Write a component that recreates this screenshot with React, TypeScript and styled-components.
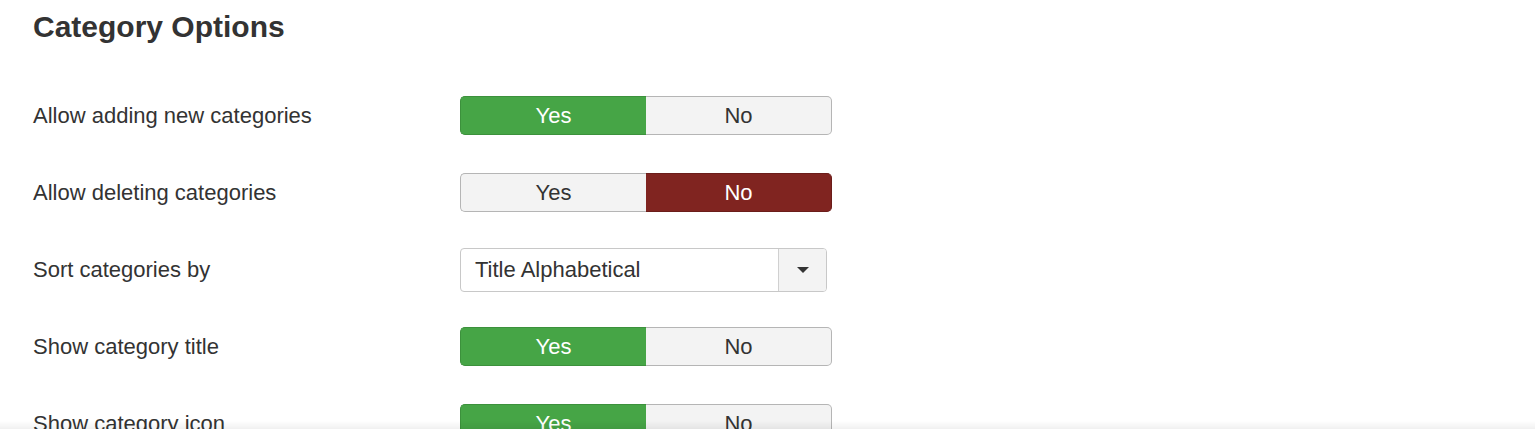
import React from "react";
import styled, { createGlobalStyle } from "styled-components";

const Global = createGlobalStyle`
  html, body { margin: 0; padding: 0; background: #fff; }
  body { font-family: "Liberation Sans", Arial, Helvetica, sans-serif; color: #333; }
`;

const Page = styled.div`
  padding: 0 0 0 33px;
`;

const Heading = styled.h2`
  margin: 0;
  height: 77px;
  padding-top: 9px;
  box-sizing: border-box;
  font-size: 30px;
  line-height: 36px;
  font-weight: 700;
  color: #333;
`;

const Row = styled.div`
  display: grid;
  grid-template-columns: 427px auto;
  align-items: center;
  height: 77px;
`;

const Label = styled.div`
  font-size: 22px;
  line-height: 28px;
  color: #333;
`;

const Toggle = styled.div`
  display: flex;
  width: 372px;
  height: 39px;
`;

type Tone = "off" | "yes" | "no";

const ToggleBtn = styled.button<{ $tone: Tone; $side: "l" | "r" }>`
  flex: 1;
  margin: 0;
  padding: 0;
  font-family: inherit;
  font-size: 22px;
  line-height: 37px;
  box-sizing: border-box;
  border: 1px solid
    ${(p) => (p.$tone === "yes" ? "#3c913c" : p.$tone === "no" ? "#6b1d1a" : "#b5b5b5")};
  ${(p) => (p.$side === "l" ? "border-right: none;" : "border-left: none;")}
  border-radius: ${(p) => (p.$side === "l" ? "5px 0 0 5px" : "0 5px 5px 0")};
  background: ${(p) => (p.$tone === "yes" ? "#46a546" : p.$tone === "no" ? "#802420" : "#f3f3f3")};
  color: ${(p) => (p.$tone === "off" ? "#333" : "#fff")};
  cursor: pointer;
`;

const Select = styled.div`
  display: flex;
  width: 367px;
  height: 44px;
  box-sizing: border-box;
  border: 1px solid #c8c8c8;
  border-radius: 4px;
  overflow: hidden;
  background: #fff;
`;

const SelectValue = styled.div`
  flex: 1;
  padding-left: 14px;
  font-size: 22px;
  line-height: 42px;
  color: #333;
`;

const SelectArrow = styled.div`
  width: 47px;
  border-left: 1px solid #d0d0d0;
  background: #f3f3f3;
  display: flex;
  align-items: center;
  justify-content: center;
`;

const Caret = styled.span`
  width: 0;
  height: 0;
  border-left: 6px solid transparent;
  border-right: 6px solid transparent;
  border-top: 6px solid #333;
  margin-left: 1px;
`;

const BottomShade = styled.div`
  position: fixed;
  left: 0;
  right: 0;
  bottom: 0;
  height: 8px;
  background: linear-gradient(to bottom, rgba(0, 0, 0, 0), rgba(0, 0, 0, 0.06));
  pointer-events: none;
`;

const YesNo: React.FC<{ value: boolean }> = ({ value }) => (
  <Toggle>
    <ToggleBtn $side="l" $tone={value ? "yes" : "off"}>Yes</ToggleBtn>
    <ToggleBtn $side="r" $tone={value ? "off" : "no"}>No</ToggleBtn>
  </Toggle>
);

export default function App() {
  return (
    <Page>
      <Global />
      <Heading>Category Options</Heading>
      <Row>
        <Label>Allow adding new categories</Label>
        <YesNo value={true} />
      </Row>
      <Row>
        <Label>Allow deleting categories</Label>
        <YesNo value={false} />
      </Row>
      <Row>
        <Label>Sort categories by</Label>
        <Select>
          <SelectValue>Title Alphabetical</SelectValue>
          <SelectArrow>
            <Caret />
          </SelectArrow>
        </Select>
      </Row>
      <Row>
        <Label>Show category title</Label>
        <YesNo value={true} />
      </Row>
      <Row>
        <Label>Show category icon</Label>
        <YesNo value={true} />
      </Row>
      <BottomShade />
    </Page>
  );
}
